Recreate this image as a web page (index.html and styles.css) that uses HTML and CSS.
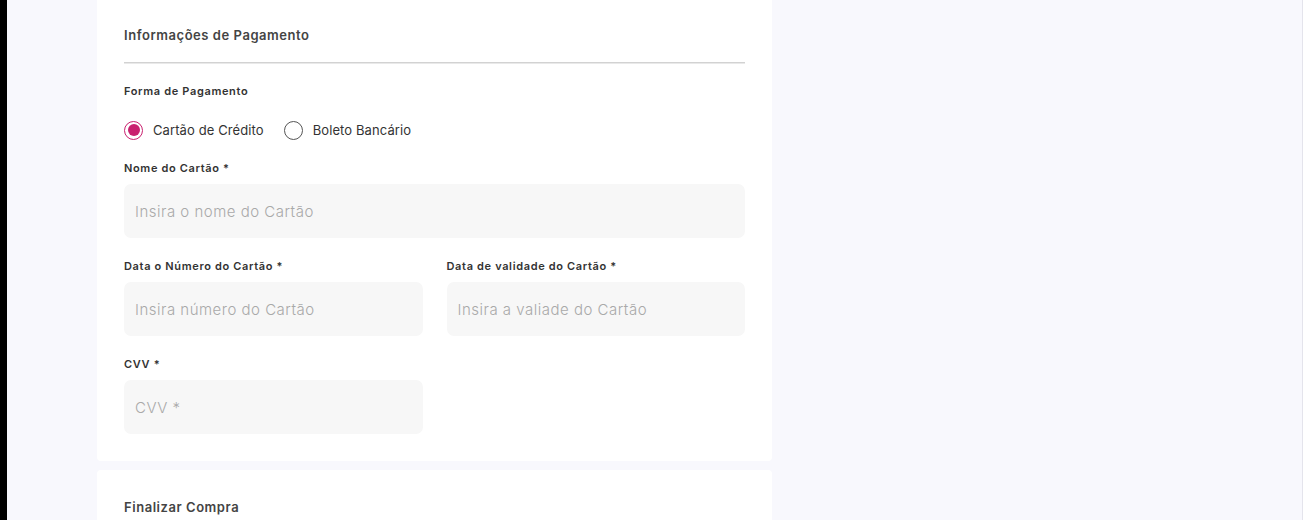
FILE: index.html
```html
<!DOCTYPE html>
<html lang="pt-BR">
<head>
<meta charset="utf-8">
<title>Pagamento</title>
<link rel="stylesheet" href="styles.css">
</head>
<body>
<div class="edge"></div>
<main class="main">
  <section class="card card-payment">
    <h2 class="card-title">Informações de Pagamento</h2>
    <div class="divider"></div>
    <div class="field">
      <span class="label">Forma de Pagamento</span>
      <div class="radios">
        <label class="radio">
          <span class="dot checked"></span>
          <span class="radio-text">Cartão de Crédito</span>
        </label>
        <label class="radio">
          <span class="dot"></span>
          <span class="radio-text">Boleto Bancário</span>
        </label>
      </div>
    </div>
    <div class="field">
      <span class="label">Nome do Cartão *</span>
      <input class="input" type="text" placeholder="Insira o nome do Cartão">
    </div>
    <div class="row">
      <div class="field">
        <span class="label">Data o Número do Cartão *</span>
        <input class="input" type="text" placeholder="Insira número do Cartão">
      </div>
      <div class="field">
        <span class="label">Data de validade do Cartão *</span>
        <input class="input" type="text" placeholder="Insira a valiade do Cartão">
      </div>
    </div>
    <div class="row">
      <div class="field">
        <span class="label">CVV *</span>
        <input class="input" type="text" placeholder="CVV *">
      </div>
      <div></div>
    </div>
  </section>
  <section class="card card-finish">
    <h2 class="card-title">Finalizar Compra</h2>
  </section>
</main>
</body>
</html>
```
FILE: styles.css
```css
* { box-sizing: border-box; }
html, body { margin: 0; padding: 0; height: 100%; overflow: hidden; }
body {
  display: flex;
  font-family: Inter, "Noto Sans", sans-serif;
  background: #f8f8fd;
}
.edge { width: 7px; flex: none; background: #000; }
.main {
  flex: 1;
  background: #f8f8fd;
  border-right: 1px solid #e4e4ec;
  padding-left: 90px;
  margin-top: -10px;
  display: flex;
  flex-direction: column;
  gap: 9px;
}
.card {
  width: 675px;
  background: #fff;
  border-radius: 4px;
  padding: 0 27px;
  flex: none;
}
.card-payment { padding-top: 36px; padding-bottom: 27px; display: flex; flex-direction: column; }
.card-finish { padding-top: 28px; height: 60px; }
.card-title {
  margin: 0;
  font-size: 13px;
  line-height: 18px;
  font-weight: 600;
  letter-spacing: 0.55px;
  color: #444;
}
.divider {
  margin-top: 18px;
  height: 2px;
  border-top: 1px solid #d2d2d2;
  border-bottom: 1px solid #e9e9e9;
  margin-bottom: 19px;
}
.field { display: flex; flex-direction: column; gap: 8px; }
.card-payment > .field + .field,
.card-payment > .field + .row,
.card-payment > .row + .row { margin-top: 20px; }
.label {
  font-size: 11px;
  line-height: 16px;
  font-weight: 600;
  letter-spacing: 0.65px;
  color: #333;
}
.radios { display: flex; gap: 20px; margin-top: 13px; height: 20px; align-items: center; }
.radio { display: flex; align-items: center; gap: 10px; }
.dot {
  width: 19px; height: 19px;
  border-radius: 50%;
  border: 1px solid #555;
  background: #fff;
  display: flex; align-items: center; justify-content: center;
}
.dot.checked { border: 1.5px solid #c9216f; }
.dot.checked::after {
  content: "";
  width: 12px; height: 12px; border-radius: 50%;
  background: #c9216f;
}
.radio-text { font-size: 13px; color: #333; letter-spacing: 0.1px; }
.row { display: grid; grid-template-columns: 1fr 1fr; gap: 24px; }
.input {
  height: 54px;
  border: none;
  border-radius: 7px;
  background: #f7f7f7;
  padding: 0 11px;
  font-family: Inter, "Noto Sans", sans-serif;
  font-size: 15px;
  font-weight: 300;
  letter-spacing: 0.5px;
  color: #333;
  outline: none;
  width: 100%;
}
.input::placeholder { color: #a9a9a9; }
```
